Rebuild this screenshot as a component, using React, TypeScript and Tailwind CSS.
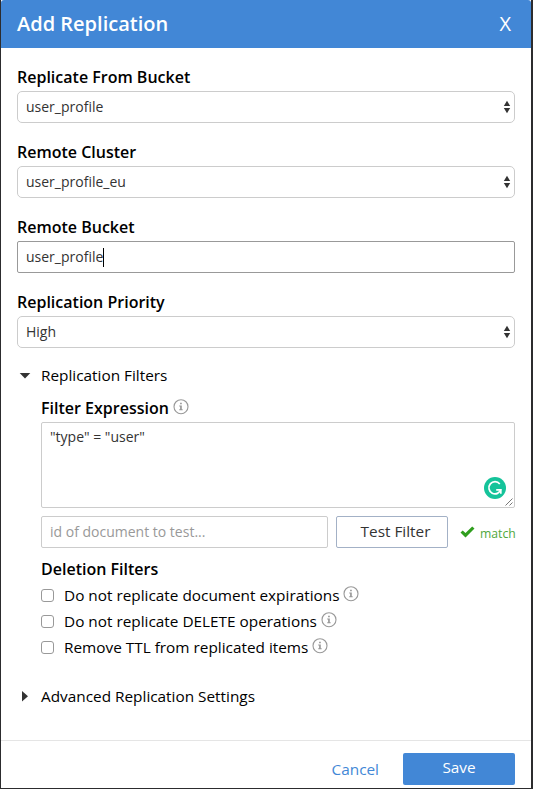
import React from "react";

function InfoIcon({ className = "" }: { className?: string }) {
  return (
    <svg viewBox="0 0 16 16" className={`h-4 w-4 shrink-0 ${className}`} fill="none">
      <circle cx="8" cy="7.7" r="7" stroke="#999" strokeWidth="1.1" />
      <path d="M7.1 3.7h1.7v1.5H7.1zM6.2 6.5h2.6v3.8h.9v1H6.2v-1h.9V7.5h-.9z" fill="#999" />
    </svg>
  );
}

function SelectBox({ value }: { value: string }) {
  return (
    <div className="flex h-8 items-center justify-between rounded-[5px] border border-[#ccc] pr-[3px] pl-2 text-sm text-[#333]">
      <span>{value}</span>
      <svg viewBox="0 0 8 14" className="h-3.5 w-2" fill="#333">
        <path d="M4 .8 7.2 6H.8zM.8 8h6.4L4 13.2z" />
      </svg>
    </div>
  );
}

function Field({ label, children }: { label: string; children: React.ReactNode }) {
  return (
    <div>
      <div className="mb-0.5 h-6 text-base leading-6 font-semibold">{label}</div>
      {children}
    </div>
  );
}

function CheckRow({ label }: { label: string }) {
  return (
    <label className="flex h-[26px] items-center">
      <span className="h-[13px] w-[13px] rounded-[3px] border border-[#999]" />
      <span className="ml-2.5 pt-0.5 text-[15.35px]">{label}</span>
      <InfoIcon className="mb-[3px] ml-1" />
    </label>
  );
}

export default function App() {
  return (
    <div className="h-[789px] w-[533px] overflow-hidden bg-[#2c2c2e] pr-0.5 pb-px pl-px font-['Open_Sans','Noto_Sans',sans-serif] text-black">
      <div className="flex h-[788px] flex-col bg-white">
        <header className="flex h-12 items-center justify-between rounded-t-[3px] bg-[#4287d6] pr-5 pl-4 text-white">
          <h1 className="text-xl font-semibold">Add Replication</h1>
          <span className="text-xl">X</span>
        </header>

        <main className="px-4 pt-[17px]">
          <div className="flex flex-col gap-[17px]">
            <Field label="Replicate From Bucket"><SelectBox value="user_profile" /></Field>
            <Field label="Remote Cluster"><SelectBox value="user_profile_eu" /></Field>
            <Field label="Remote Bucket">
              <div className="flex h-8 items-center rounded-[2px] border border-[#999] pl-2 text-sm text-[#333]">
                <span>user_profile</span>
                <span className="h-[19px] w-px bg-black" />
              </div>
            </Field>
            <Field label="Replication Priority"><SelectBox value="High" /></Field>
          </div>

          <div className="mt-[15px] flex h-6 items-center">
            <svg viewBox="0 0 24 24" className="h-6 w-6" fill="#333"><path d="M2.7 9.9h10.6L8 15.5z" /></svg>
            <span className="text-[15.35px] leading-6">Replication Filters</span>
          </div>

          <section className="mt-[9px] pl-6">
            <div className="mb-0.5 flex h-6 items-center">
              <span className="text-base font-semibold">Filter Expression</span>
              <InfoIcon className="mb-0.5 ml-1" />
            </div>
            <div className="relative h-[86px] rounded-[2px] border border-[#ccc] pt-1 pl-2 text-sm text-[#333]">
              "type" = "user"
              <svg viewBox="0 0 22 22" className="absolute right-2 bottom-2 h-[22px] w-[22px]" fill="none">
                <circle cx="11" cy="11" r="11" fill="#15c39a" />
                <path d="M15.8 7A6.1 6.1 0 1 0 16.9 12.4" stroke="white" strokeWidth="1.7" />
                <path d="M12.2 12.8h4.6v4" stroke="white" strokeWidth="1.7" />
              </svg>
              <svg viewBox="0 0 8 8" className="absolute right-px bottom-px h-2 w-2" stroke="#555" strokeWidth=".8"><path d="M.5 7.5l7-7M4.5 7.5l3-3" /></svg>
            </div>
            <div className="mt-2 flex h-8 items-center">
              <div className="flex h-8 w-[287px] shrink-0 items-center rounded-[2px] border border-[#ccc] pl-2 text-sm text-[#999]">id of document to test...</div>
              <button className="ml-2 h-8 w-28 shrink-0 rounded-[2px] border border-[#a3b1c6] pl-[7px] text-[15.35px] text-[#333]">Test Filter</button>
              <svg viewBox="0 0 14 12" className="ml-3 h-3 w-[15px] shrink-0" fill="#2f9e1d"><path d="M0 6.6 2.2 4.4 5 7.1 11.7.4 14 2.6 5 11.6z" /></svg>
              <span className="ml-[5px] pt-1 text-[12.2px] text-[#4fa83d]">match</span>
            </div>
            <h2 className="mt-[9px] mb-px h-6 text-base leading-6 font-semibold">Deletion Filters</h2>
            <CheckRow label="Do not replicate document expirations" />
            <CheckRow label="Do not replicate DELETE operations" />
            <CheckRow label="Remove TTL from replicated items" />
          </section>

          <div className="mt-6 flex h-6 items-center">
            <svg viewBox="0 0 24 24" className="h-6 w-6" fill="#333"><path d="M5 6.9v10.6L11 12.2z" /></svg>
            <span className="text-[15.35px] leading-6">Advanced Replication Settings</span>
          </div>
        </main>

        <footer className="mt-auto flex h-12 items-start justify-end border-t border-[#e5e5e5] pt-3 pr-4 text-[15.35px]">
          <button className="mr-6 h-8 pt-0.5 text-[#4287d6]">Cancel</button>
          <button className="h-8 w-28 rounded-[2px] bg-[#4287d6] pb-0.5 text-white">Save</button>
        </footer>
      </div>
    </div>
  );
}
